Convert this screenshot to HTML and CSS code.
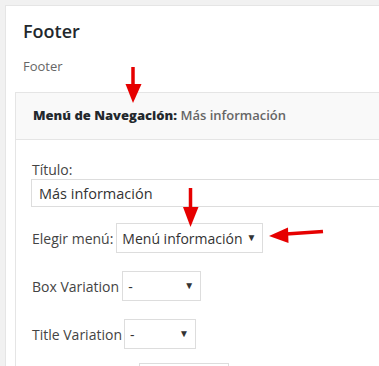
FILE: index.html
```html
<!DOCTYPE html>
<html lang="es">

<head>
    <meta charset="UTF-8">
    <meta name="viewport" content="width=device-width, initial-scale=1.0">
    <title>Footer</title>
    <link rel="stylesheet" href="styles.css">
</head>

<body>
    <section class="sidebar">
        <h2 class="sidebar-name">Footer</h2>
        <p class="sidebar-desc">Footer</p>
        <div class="widget">
            <div class="widget-top">
                <h3><strong>Menú de Navegación:</strong> <span class="in-title">Más información</span></h3>
            </div>
            <form class="widget-inside">
                <div class="field">
                    <label for="title">Título:</label>
                    <input type="text" id="title" class="text-input" value="Más información">
                </div>
                <div class="row">
                    <label for="menu">Elegir menú:</label>
                    <span class="select select-menu">
                        <select id="menu">
                            <option>Menú información</option>
                        </select>
                    </span>
                </div>
                <div class="row">
                    <label for="box">Box Variation</label>
                    <span class="select select-box">
                        <select id="box">
                            <option>-</option>
                        </select>
                    </span>
                </div>
                <div class="row">
                    <label for="tvar">Title Variation</label>
                    <span class="select select-title">
                        <select id="tvar">
                            <option>-</option>
                        </select>
                    </span>
                </div>
                <div class="row row-last">
                    <span class="select select-more">
                        <select id="more" aria-label="Link Variation">
                            <option>-</option>
                        </select>
                    </span>
                </div>
            </form>
        </div>
    </section>

    <!-- flechas rojas de la captura -->
    <svg class="arrows" width="379" height="366" viewBox="0 0 379 366">
        <g fill="#e60000" stroke="#e60000">
            <line x1="133" y1="67" x2="133" y2="86" stroke-width="3.5" />
            <polygon points="125.5,84 141.5,84 133,103" stroke="none" />
            <line x1="190.5" y1="188" x2="190.5" y2="209" stroke-width="3.5" />
            <polygon points="183,207 198.5,207 190.5,227" stroke="none" />
            <line x1="286" y1="234" x2="323" y2="231.5" stroke-width="3.5" />
            <polygon points="288,227.5 288.5,243 269,236" stroke="none" />
        </g>
    </svg>
</body>

</html>
```

FILE: styles.css
```css
html, body {
    margin: 0;
    height: 100%;
    overflow: hidden;
}
body {
    background: #f1f1f1;
    font-family: "Open Sans", "Liberation Sans", sans-serif;
    color: #444;
    position: relative;
}
.sidebar {
    margin: 5px 0 0 5px;
    width: 520px;
    height: 600px;
    background: #fff;
    border: 1px solid #e5e5e5;
    padding: 0 9px;
    box-sizing: border-box;
}
.sidebar-name {
    margin: 0;
    padding: 12px 8px 0;
    font-size: 18px;
    font-weight: 600;
    color: #23282d;
    line-height: 26px;
}
.sidebar-desc {
    margin: 0;
    padding: 13px 8px 0;
    font-size: 13px;
    color: #666;
    line-height: 18px;
}
.widget {
    margin-top: 17px;
    border: 1px solid #e5e5e5;
}
.widget-top {
    background: #f9f9f9;
    border-bottom: 1px solid #e5e5e5;
    height: 46px;
    display: flex;
    align-items: center;
    padding-left: 17px;
}
.widget-top h3 {
    margin: 0 0 3px;
    font-size: 13px;
    font-weight: 600;
    color: #23282d;
}
.in-title {
    color: #666;
}
.widget-inside {
    padding: 20px 16px;
}
.field label {
    display: block;
    font-size: 14px;
    line-height: 19px;
}
.text-input {
    display: block;
    width: 400px;
    height: 28px;
    margin: 0 0 0 -1px;
    box-sizing: border-box;
    border: 1px solid #ddd;
    padding: 0 7px;
    font-family: inherit;
    font-size: 14.5px;
    color: #333;
}
.row {
    display: flex;
    align-items: center;
    gap: 4px;
    margin-top: 16px;
    font-size: 14px;
}
.row + .row {
    margin-top: 18px;
}
.row + .row-last {
    margin-top: 14px;
}
.select {
    position: relative;
    display: block;
}
.select select {
    appearance: none;
    -webkit-appearance: none;
    display: block;
    height: 30px;
    border: 1px solid #ddd;
    border-radius: 0;
    background: #fff;
    padding: 0 18px 0 5px;
    font-family: inherit;
    font-size: 14px;
    color: #333;
    box-sizing: border-box;
    width: 100%;
}
.select::after {
    content: "\25BC";
    position: absolute;
    right: 7px;
    top: 7px;
    font-size: 10px;
    color: #333;
    pointer-events: none;
}
.select-menu {
    width: 147px;
    margin-left: -1px;
}
.select-box {
    width: 79px;
    margin-left: -1px;
}
.select-title {
    width: 72px;
    margin-left: -2px;
}
.select-more {
    width: 90px;
    margin-left: 107px;
}
.arrows {
    position: absolute;
    left: 0;
    top: 0;
}
```
